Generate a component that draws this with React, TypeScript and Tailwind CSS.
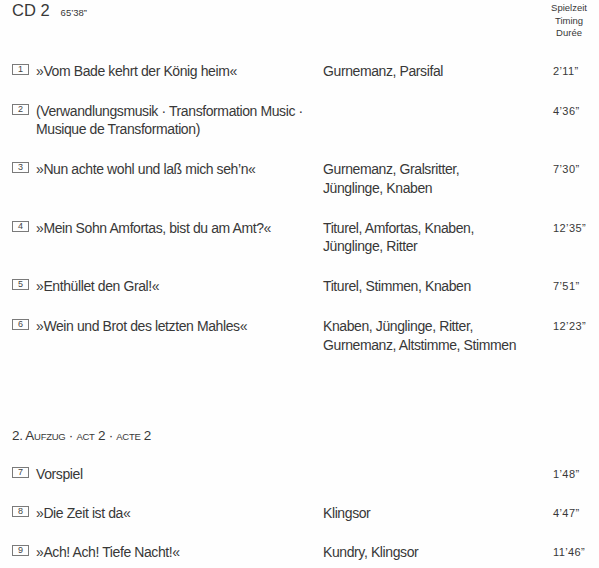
import * as React from "react";

type Track = {
  no: number;
  title: string[];
  cast: string[];
  time: string;
};

const act1: Track[] = [
  { no: 1, title: ["»Vom Bade kehrt der König heim«"], cast: ["Gurnemanz, Parsifal"], time: "2’11”" },
  {
    no: 2,
    title: ["(Verwandlungsmusik · Transformation Music ·", "Musique de Transformation)"],
    cast: [],
    time: "4’36”",
  },
  {
    no: 3,
    title: ["»Nun achte wohl und laß mich seh’n«"],
    cast: ["Gurnemanz, Gralsritter,", "Jünglinge, Knaben"],
    time: "7’30”",
  },
  {
    no: 4,
    title: ["»Mein Sohn Amfortas, bist du am Amt?«"],
    cast: ["Titurel, Amfortas, Knaben,", "Jünglinge, Ritter"],
    time: "12’35”",
  },
  { no: 5, title: ["»Enthüllet den Gral!«"], cast: ["Titurel, Stimmen, Knaben"], time: "7’51”" },
  {
    no: 6,
    title: ["»Wein und Brot des letzten Mahles«"],
    cast: ["Knaben, Jünglinge, Ritter,", "Gurnemanz, Altstimme, Stimmen"],
    time: "12’23”",
  },
];

const act2: Track[] = [
  { no: 7, title: ["Vorspiel"], cast: [], time: "1’48”" },
  { no: 8, title: ["»Die Zeit ist da«"], cast: ["Klingsor"], time: "4’47”" },
  { no: 9, title: ["»Ach! Ach! Tiefe Nacht!«"], cast: ["Kundry, Klingsor"], time: "11’46”" },
];

// one track line: numbered box, title, cast, timing
function Row({ t }: { t: Track }) {
  return (
    <div className="grid grid-cols-[24px_287px_230px_1fr] items-start leading-[18.5px] tracking-[-0.4px]">
      <div className="pt-[2px]">
        <div className="flex h-[11px] w-[17px] items-center justify-center border border-[#7a7a7a] text-[9px] leading-none tracking-normal text-[#444]">
          {t.no}
        </div>
      </div>
      <div>
        {t.title.map((l) => (
          <div key={l}>{l}</div>
        ))}
      </div>
      <div>
        {t.cast.map((l) => (
          <div key={l}>{l}</div>
        ))}
      </div>
      <div className="text-[11px] tracking-[0.4px]">{t.time}</div>
    </div>
  );
}

export default function App() {
  return (
    <div
      className="relative h-[568px] w-[599px] overflow-hidden bg-[#fefefe] pl-[12px] pr-[16px] text-[14px] text-[#383838]"
      style={{ fontFamily: '"Liberation Sans", Arial, sans-serif' }}
    >
      {/* header */}
      <div className="flex items-start justify-between">
        <div className="flex items-baseline gap-[11px]">
          <span className="text-[16.5px] leading-[20px]">CD 2</span>
          <span className="text-[9.5px]">65’38”</span>
        </div>
        <div className="-mr-[4px] pt-[2px] text-center text-[9.5px] leading-[12.5px]">
          <div>Spielzeit</div>
          <div>Timing</div>
          <div>Durée</div>
        </div>
      </div>

      <div className="mt-[22px] flex flex-col gap-[21.5px]">
        {act1.map((t) => (
          <Row key={t.no} t={t} />
        ))}
      </div>

      <div className="mt-[73px] text-[13.5px] leading-[18.5px] tracking-[-0.3px]">
        2. A<span className="text-[9.5px]">UFZUG</span> · <span className="text-[9.5px]">ACT</span> 2 ·{" "}
        <span className="text-[9.5px]">ACTE</span> 2
      </div>

      <div className="mt-[18px] flex flex-col gap-[20.5px]">
        {act2.map((t) => (
          <Row key={t.no} t={t} />
        ))}
      </div>
    </div>
  );
}
